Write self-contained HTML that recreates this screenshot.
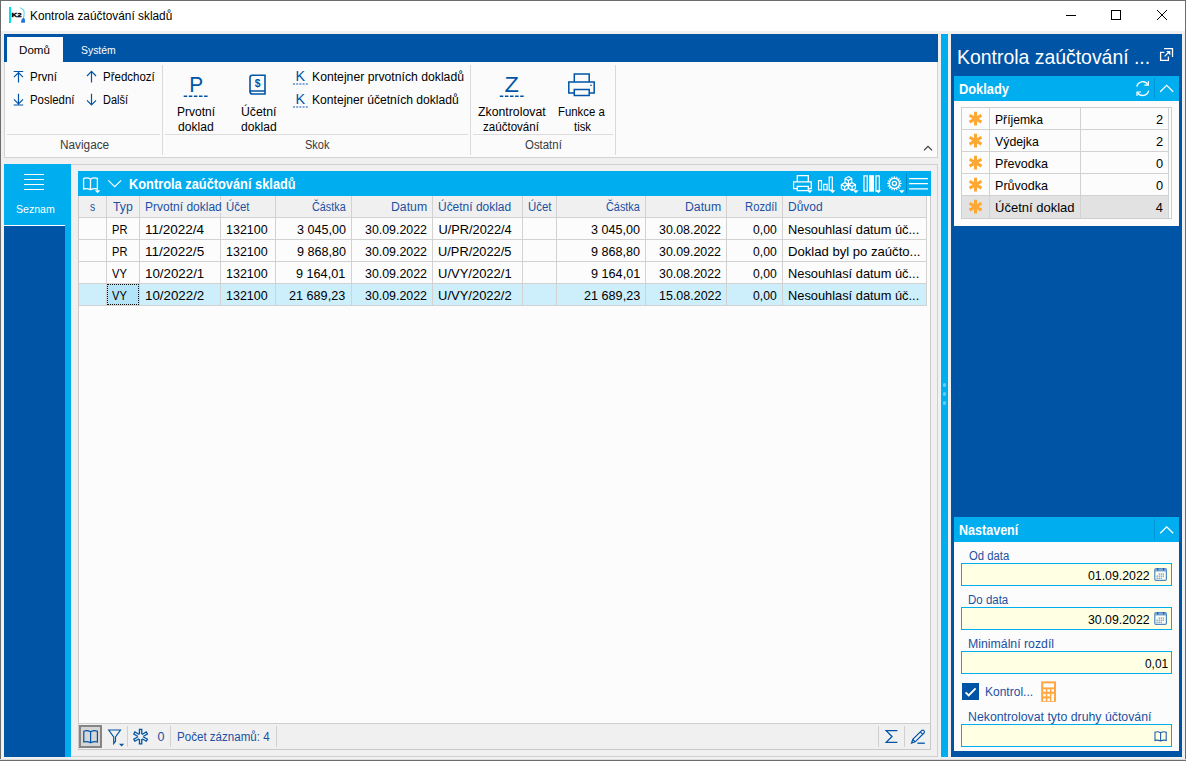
<!DOCTYPE html>
<html lang="cs"><head><meta charset="utf-8"><title>Kontrola zaúčtování skladů</title>
<style>
html,body{margin:0;padding:0;}
body{width:1186px;height:761px;position:relative;overflow:hidden;background:#f0f0f0;font-family:"Liberation Sans",sans-serif;}
#w{position:absolute;left:0;top:0;width:1186px;height:761px;overflow:hidden;}
#w div,#w span,#w svg{position:absolute;display:block;}
#w span{white-space:nowrap;transform-origin:0 0;}
</style></head><body><div id="w">
<div style="left:1px;top:1px;width:1184px;height:30px;background:#ffffff;"></div>
<div style="left:0px;top:0px;width:1186px;height:1px;background:#6c6c6c;"></div>
<div style="left:0px;top:0px;width:1px;height:761px;background:#6c6c6c;"></div>
<div style="left:1185px;top:0px;width:1px;height:761px;background:#6c6c6c;"></div>
<div style="left:0px;top:759px;width:1186px;height:1px;background:#dcdcdc;"></div>
<div style="left:0px;top:760px;width:1186px;height:1px;background:#6c6c6c;"></div>
<span style="left:30.10px;top:9.00px;font-size:12.5px;line-height:14px;color:#000;transform:scaleX(0.9481);">Kontrola zaúčtování skladů</span>
<div style="left:4px;top:34px;width:934px;height:28px;background:#0054a6;"></div>
<div style="left:7px;top:37px;width:56px;height:25px;background:#fbfbfb;"></div>
<div style="left:4px;top:62px;width:934px;height:96px;background:#fbfbfb;box-sizing:border-box;border:1px solid #d3d3d3;border-top:none;"></div>
<span style="left:19.16px;top:44.00px;font-size:11.4px;line-height:12px;color:#000;transform:scaleX(1.0187);">Domů</span>
<span style="left:80.59px;top:44.00px;font-size:11.4px;line-height:12px;color:#fff;transform:scaleX(0.9129);">Systém</span>
<div style="left:162px;top:65px;width:1px;height:90px;background:#dadada;"></div>
<div style="left:470px;top:65px;width:1px;height:90px;background:#dadada;"></div>
<div style="left:615px;top:65px;width:1px;height:90px;background:#dadada;"></div>
<div style="left:7px;top:134px;width:153px;height:1px;background:#dcdcdc;"></div>
<div style="left:165px;top:134px;width:303px;height:1px;background:#dcdcdc;"></div>
<div style="left:473px;top:134px;width:140px;height:1px;background:#dcdcdc;"></div>
<span style="left:59.51px;top:137.70px;font-size:12.5px;line-height:14px;color:#3a3a3a;transform:scaleX(0.9432);">Navigace</span>
<span style="left:304.55px;top:137.70px;font-size:12.5px;line-height:14px;color:#3a3a3a;transform:scaleX(0.8805);">Skok</span>
<span style="left:525.34px;top:137.70px;font-size:12.5px;line-height:14px;color:#3a3a3a;transform:scaleX(0.9134);">Ostatní</span>
<span style="left:29.93px;top:69.60px;font-size:12.5px;line-height:14px;color:#000;transform:scaleX(0.9227);">První</span>
<span style="left:29.94px;top:92.60px;font-size:12.5px;line-height:14px;color:#000;transform:scaleX(0.9144);">Poslední</span>
<span style="left:102.73px;top:69.60px;font-size:12.5px;line-height:14px;color:#000;transform:scaleX(0.9204);">Předchozí</span>
<span style="left:102.77px;top:92.60px;font-size:12.5px;line-height:14px;color:#000;transform:scaleX(0.8765);">Další</span>
<span style="left:176.89px;top:104.60px;font-size:12.5px;line-height:14px;color:#000;transform:scaleX(0.9608);">Prvotní</span>
<span style="left:178.47px;top:119.60px;font-size:12.5px;line-height:14px;color:#000;transform:scaleX(0.9687);">doklad</span>
<span style="left:240.53px;top:104.60px;font-size:12.5px;line-height:14px;color:#000;transform:scaleX(0.9808);">Účetní</span>
<span style="left:240.57px;top:119.60px;font-size:12.5px;line-height:14px;color:#000;transform:scaleX(0.9687);">doklad</span>
<span style="left:311.77px;top:69.60px;font-size:12.5px;line-height:14px;color:#000;transform:scaleX(0.9762);">Kontejner prvotních dokladů</span>
<span style="left:311.78px;top:92.60px;font-size:12.5px;line-height:14px;color:#000;transform:scaleX(0.9684);">Kontejner účetních dokladů</span>
<span style="left:478.28px;top:104.60px;font-size:12.5px;line-height:14px;color:#000;transform:scaleX(0.9835);">Zkontrolovat</span>
<span style="left:482.99px;top:119.60px;font-size:12.5px;line-height:14px;color:#000;transform:scaleX(0.9251);">zaúčtování</span>
<span style="left:557.84px;top:104.60px;font-size:12.5px;line-height:14px;color:#000;transform:scaleX(0.9090);">Funkce a</span>
<span style="left:573.58px;top:119.60px;font-size:12.5px;line-height:14px;color:#000;transform:scaleX(0.9047);">tisk</span>
<div style="left:4px;top:164px;width:67px;height:593px;background:#00adef;"></div>
<div style="left:4px;top:226px;width:61px;height:531px;background:#0054a6;"></div>
<div style="left:4px;top:225px;width:61px;height:1px;background:#ffffff;"></div>
<div style="left:24px;top:174px;width:20px;height:1.25px;background:#ffffff;"></div>
<div style="left:24px;top:179px;width:20px;height:1.25px;background:#ffffff;"></div>
<div style="left:24px;top:184px;width:20px;height:1.25px;background:#ffffff;"></div>
<div style="left:24px;top:189px;width:20px;height:1.25px;background:#ffffff;"></div>
<span style="left:15.78px;top:202.90px;font-size:11.3px;line-height:12px;color:#fff;transform:scaleX(0.9329);">Seznam</span>
<div style="left:71px;top:164px;width:867px;height:593px;background:#f0f0f0;box-sizing:border-box;border:1px solid #d0d0d0;border-left:none;"></div>
<div style="left:78px;top:171px;width:853px;height:25px;background:#00adef;"></div>
<span style="left:128.54px;top:175.80px;font-size:13.9px;line-height:16px;color:#fff;font-weight:bold;transform:scaleX(0.9229);">Kontrola zaúčtování skladů</span>
<div style="left:78px;top:196px;width:853px;height:554px;background:#fcfcfc;box-sizing:border-box;border:1px solid #c9c9c9;border-top:none;"></div>
<div style="left:79px;top:196px;width:847px;height:21px;background:#f0f0f0;"></div>
<div style="left:79px;top:284px;width:847px;height:21px;background:#cdeefb;"></div>
<div style="left:107px;top:284px;width:32px;height:21px;background:#b4e4f8;box-sizing:border-box;border:1px dotted #111;"></div>
<div style="left:79px;top:217px;width:848px;height:1px;background:#d2d2d2;"></div>
<div style="left:79px;top:239px;width:848px;height:1px;background:#d2d2d2;"></div>
<div style="left:79px;top:261px;width:848px;height:1px;background:#d2d2d2;"></div>
<div style="left:79px;top:283px;width:848px;height:1px;background:#d2d2d2;"></div>
<div style="left:79px;top:305px;width:848px;height:1px;background:#d2d2d2;"></div>
<div style="left:106px;top:196px;width:1px;height:110px;background:#d2d2d2;"></div>
<div style="left:139px;top:196px;width:1px;height:110px;background:#d2d2d2;"></div>
<div style="left:220px;top:196px;width:1px;height:110px;background:#d2d2d2;"></div>
<div style="left:275px;top:196px;width:1px;height:110px;background:#d2d2d2;"></div>
<div style="left:351px;top:196px;width:1px;height:110px;background:#d2d2d2;"></div>
<div style="left:432px;top:196px;width:1px;height:110px;background:#d2d2d2;"></div>
<div style="left:522px;top:196px;width:1px;height:110px;background:#d2d2d2;"></div>
<div style="left:556px;top:196px;width:1px;height:110px;background:#d2d2d2;"></div>
<div style="left:645px;top:196px;width:1px;height:110px;background:#d2d2d2;"></div>
<div style="left:726px;top:196px;width:1px;height:110px;background:#d2d2d2;"></div>
<div style="left:782px;top:196px;width:1px;height:110px;background:#d2d2d2;"></div>
<div style="left:926px;top:196px;width:1px;height:110px;background:#d2d2d2;"></div>
<span style="left:90.39px;top:200.00px;font-size:12.5px;line-height:14px;color:#1b50a2;transform:scaleX(0.8273);">s</span>
<span style="left:112.71px;top:200.00px;font-size:12.5px;line-height:14px;color:#1b50a2;transform:scaleX(0.9781);">Typ</span>
<div style="left:220px;top:200px;width:1px;height:13px;background:#f0f0f0;"></div>
<span style="left:144.89px;top:200.00px;font-size:12.5px;line-height:14px;color:#1b50a2;transform:scaleX(0.9606);">Prvotní doklad</span>
<span style="left:226.40px;top:200.00px;font-size:12.5px;line-height:14px;color:#1b50a2;transform:scaleX(0.9111);">Účet</span>
<span style="left:311.51px;top:200.00px;font-size:12.5px;line-height:14px;color:#1b50a2;transform:scaleX(0.8653);">Částka</span>
<span style="left:391.37px;top:200.00px;font-size:12.5px;line-height:14px;color:#1b50a2;transform:scaleX(0.9814);">Datum</span>
<span style="left:438.25px;top:200.00px;font-size:12.5px;line-height:14px;color:#1b50a2;transform:scaleX(0.9572);">Účetní doklad</span>
<span style="left:528.49px;top:200.00px;font-size:12.5px;line-height:14px;color:#1b50a2;transform:scaleX(0.9152);">Účet</span>
<span style="left:605.51px;top:200.00px;font-size:12.5px;line-height:14px;color:#1b50a2;transform:scaleX(0.8705);">Částka</span>
<span style="left:684.97px;top:200.00px;font-size:12.5px;line-height:14px;color:#1b50a2;transform:scaleX(0.9814);">Datum</span>
<span style="left:745.25px;top:200.00px;font-size:12.5px;line-height:14px;color:#1b50a2;transform:scaleX(0.9026);">Rozdíl</span>
<span style="left:787.99px;top:200.00px;font-size:12.5px;line-height:14px;color:#1b50a2;transform:scaleX(0.9585);">Důvod</span>
<span style="left:112.29px;top:221.80px;font-size:12.8px;line-height:15px;color:#000;transform:scaleX(0.8646);">PR</span>
<span style="left:145.06px;top:221.80px;font-size:12.8px;line-height:15px;color:#000;transform:scaleX(1.0542);">11/2022/4</span>
<span style="left:226.34px;top:221.80px;font-size:12.8px;line-height:15px;color:#000;transform:scaleX(0.9758);">132100</span>
<span style="left:296.62px;top:221.80px;font-size:12.8px;line-height:15px;color:#000;transform:scaleX(0.9831);">3 045,00</span>
<span style="left:365.33px;top:221.80px;font-size:12.8px;line-height:15px;color:#000;transform:scaleX(0.9675);">30.09.2022</span>
<span style="left:438.41px;top:221.80px;font-size:12.8px;line-height:15px;color:#000;">U/PR/2022/4</span>
<span style="left:590.82px;top:221.80px;font-size:12.8px;line-height:15px;color:#000;transform:scaleX(0.9831);">3 045,00</span>
<span style="left:659.03px;top:221.80px;font-size:12.8px;line-height:15px;color:#000;transform:scaleX(0.9675);">30.08.2022</span>
<span style="left:753.27px;top:221.80px;font-size:12.8px;line-height:15px;color:#000;transform:scaleX(0.9504);">0,00</span>
<span style="left:788.05px;top:221.80px;font-size:12.8px;line-height:15px;color:#000;transform:scaleX(1.0026);">Nesouhlasí datum úč...</span>
<span style="left:112.29px;top:243.80px;font-size:12.8px;line-height:15px;color:#000;transform:scaleX(0.8646);">PR</span>
<span style="left:145.06px;top:243.80px;font-size:12.8px;line-height:15px;color:#000;transform:scaleX(1.0566);">11/2022/5</span>
<span style="left:226.34px;top:243.80px;font-size:12.8px;line-height:15px;color:#000;transform:scaleX(0.9758);">132100</span>
<span style="left:296.50px;top:243.80px;font-size:12.8px;line-height:15px;color:#000;transform:scaleX(0.9856);">9 868,80</span>
<span style="left:365.33px;top:243.80px;font-size:12.8px;line-height:15px;color:#000;transform:scaleX(0.9675);">30.09.2022</span>
<span style="left:438.41px;top:243.80px;font-size:12.8px;line-height:15px;color:#000;transform:scaleX(1.0024);">U/PR/2022/5</span>
<span style="left:590.70px;top:243.80px;font-size:12.8px;line-height:15px;color:#000;transform:scaleX(0.9856);">9 868,80</span>
<span style="left:659.03px;top:243.80px;font-size:12.8px;line-height:15px;color:#000;transform:scaleX(0.9675);">30.09.2022</span>
<span style="left:753.27px;top:243.80px;font-size:12.8px;line-height:15px;color:#000;transform:scaleX(0.9504);">0,00</span>
<span style="left:788.03px;top:243.80px;font-size:12.8px;line-height:15px;color:#000;transform:scaleX(1.0234);">Doklad byl po zaúčto...</span>
<span style="left:112.35px;top:265.80px;font-size:12.8px;line-height:15px;color:#000;transform:scaleX(0.8681);">VY</span>
<span style="left:145.07px;top:265.80px;font-size:12.8px;line-height:15px;color:#000;transform:scaleX(1.0411);">10/2022/1</span>
<span style="left:226.34px;top:265.80px;font-size:12.8px;line-height:15px;color:#000;transform:scaleX(0.9758);">132100</span>
<span style="left:296.49px;top:265.80px;font-size:12.8px;line-height:15px;color:#000;transform:scaleX(0.9882);">9 164,01</span>
<span style="left:365.33px;top:265.80px;font-size:12.8px;line-height:15px;color:#000;transform:scaleX(0.9675);">30.09.2022</span>
<span style="left:438.40px;top:265.80px;font-size:12.8px;line-height:15px;color:#000;transform:scaleX(1.0148);">U/VY/2022/1</span>
<span style="left:590.69px;top:265.80px;font-size:12.8px;line-height:15px;color:#000;transform:scaleX(0.9882);">9 164,01</span>
<span style="left:659.03px;top:265.80px;font-size:12.8px;line-height:15px;color:#000;transform:scaleX(0.9675);">30.08.2022</span>
<span style="left:753.27px;top:265.80px;font-size:12.8px;line-height:15px;color:#000;transform:scaleX(0.9504);">0,00</span>
<span style="left:788.05px;top:265.80px;font-size:12.8px;line-height:15px;color:#000;transform:scaleX(1.0026);">Nesouhlasí datum úč...</span>
<span style="left:112.35px;top:287.80px;font-size:12.8px;line-height:15px;color:#000;transform:scaleX(0.8681);">VY</span>
<span style="left:145.07px;top:287.80px;font-size:12.8px;line-height:15px;color:#000;transform:scaleX(1.0411);">10/2022/2</span>
<span style="left:226.34px;top:287.80px;font-size:12.8px;line-height:15px;color:#000;transform:scaleX(0.9758);">132100</span>
<span style="left:289.43px;top:287.80px;font-size:12.8px;line-height:15px;color:#000;transform:scaleX(0.9874);">21 689,23</span>
<span style="left:365.33px;top:287.80px;font-size:12.8px;line-height:15px;color:#000;transform:scaleX(0.9675);">30.09.2022</span>
<span style="left:438.40px;top:287.80px;font-size:12.8px;line-height:15px;color:#000;transform:scaleX(1.0148);">U/VY/2022/2</span>
<span style="left:583.63px;top:287.80px;font-size:12.8px;line-height:15px;color:#000;transform:scaleX(0.9874);">21 689,23</span>
<span style="left:658.54px;top:287.80px;font-size:12.8px;line-height:15px;color:#000;transform:scaleX(0.9752);">15.08.2022</span>
<span style="left:753.27px;top:287.80px;font-size:12.8px;line-height:15px;color:#000;transform:scaleX(0.9504);">0,00</span>
<span style="left:788.05px;top:287.80px;font-size:12.8px;line-height:15px;color:#000;transform:scaleX(1.0026);">Nesouhlasí datum úč...</span>
<div style="left:79px;top:724px;width:851px;height:25px;background:#f0f0f0;"></div>
<div style="left:79px;top:723px;width:851px;height:1px;background:#cfcfcf;"></div>
<div style="left:79px;top:725px;width:23px;height:23px;background:#d6d6d6;box-sizing:border-box;border:2px solid #858585;"></div>
<div style="left:127px;top:726px;width:1px;height:21px;background:#d0d0d0;"></div>
<div style="left:170px;top:726px;width:1px;height:21px;background:#d0d0d0;"></div>
<div style="left:276px;top:726px;width:1px;height:21px;background:#d0d0d0;"></div>
<div style="left:878px;top:726px;width:1px;height:21px;background:#d0d0d0;"></div>
<div style="left:904px;top:726px;width:1px;height:21px;background:#d0d0d0;"></div>
<span style="left:157.51px;top:730.00px;font-size:12.5px;line-height:14px;color:#1b50a2;">0</span>
<span style="left:176.92px;top:730.00px;font-size:12.5px;line-height:14px;color:#1b50a2;transform:scaleX(0.9261);">Počet záznamů: 4</span>
<div style="left:941px;top:34px;width:7px;height:723px;background:#00adef;"></div>
<div style="left:948px;top:34px;width:3px;height:723px;background:#f0f0f0;"></div>
<div style="left:951px;top:34px;width:231px;height:723px;background:#0054a6;"></div>
<div style="left:943px;top:383.3px;width:3.4px;height:3.4px;background:#6ccdf4;border-radius:50%;"></div>
<div style="left:943px;top:392.3px;width:3.4px;height:3.4px;background:#6ccdf4;border-radius:50%;"></div>
<div style="left:943px;top:401.3px;width:3.4px;height:3.4px;background:#6ccdf4;border-radius:50%;"></div>
<span style="left:957.49px;top:44.80px;font-size:21.0px;line-height:23px;color:#fff;transform:scaleX(0.9244);">Kontrola zaúčtování ...</span>
<div style="left:954px;top:76px;width:225px;height:25px;background:#00adef;"></div>
<span style="left:958.75px;top:80.90px;font-size:14px;line-height:16px;color:#fff;font-weight:bold;transform:scaleX(0.9176);">Doklady</span>
<div style="left:1154px;top:78px;width:1px;height:20px;background:#0095d6;"></div>
<div style="left:954px;top:101px;width:225px;height:125px;background:#fcfcfc;"></div>
<div style="left:961px;top:107px;width:211px;height:112px;background:#fcfcfc;box-sizing:border-box;border:1px solid #cfcfcf;"></div>
<div style="left:962px;top:196px;width:206px;height:22px;background:#e2e2e2;"></div>
<div style="left:962px;top:129px;width:206px;height:1px;background:#d2d2d2;"></div>
<div style="left:962px;top:151px;width:206px;height:1px;background:#d2d2d2;"></div>
<div style="left:962px;top:173px;width:206px;height:1px;background:#d2d2d2;"></div>
<div style="left:962px;top:195px;width:206px;height:1px;background:#d2d2d2;"></div>
<div style="left:989px;top:108px;width:1px;height:110px;background:#d2d2d2;"></div>
<div style="left:1080px;top:108px;width:1px;height:110px;background:#d2d2d2;"></div>
<div style="left:1168px;top:108px;width:1px;height:110px;background:#d2d2d2;"></div>
<span style="left:995.40px;top:112.20px;font-size:12.8px;line-height:15px;color:#000;transform:scaleX(0.9493);">Příjemka</span>
<span style="left:1156.00px;top:112.20px;font-size:12.8px;line-height:15px;color:#000;">2</span>
<span style="left:995.45px;top:134.20px;font-size:12.8px;line-height:15px;color:#000;transform:scaleX(0.9633);">Výdejka</span>
<span style="left:1156.00px;top:134.20px;font-size:12.8px;line-height:15px;color:#000;">2</span>
<span style="left:995.37px;top:156.20px;font-size:12.8px;line-height:15px;color:#000;transform:scaleX(0.9816);">Převodka</span>
<span style="left:1155.88px;top:156.20px;font-size:12.8px;line-height:15px;color:#000;">0</span>
<span style="left:995.37px;top:178.20px;font-size:12.8px;line-height:15px;color:#000;transform:scaleX(0.9816);">Průvodka</span>
<span style="left:1155.88px;top:178.20px;font-size:12.8px;line-height:15px;color:#000;">0</span>
<span style="left:995.40px;top:200.20px;font-size:12.8px;line-height:15px;color:#000;transform:scaleX(1.0163);">Účetní doklad</span>
<span style="left:1155.75px;top:200.20px;font-size:12.8px;line-height:15px;color:#000;">4</span>
<div style="left:954px;top:517px;width:225px;height:25px;background:#00adef;"></div>
<span style="left:958.87px;top:521.90px;font-size:14px;line-height:16px;color:#fff;font-weight:bold;transform:scaleX(0.8959);">Nastavení</span>
<div style="left:1154px;top:519px;width:1px;height:21px;background:#0095d6;"></div>
<div style="left:954px;top:542px;width:225px;height:209px;background:#fcfcfc;"></div>
<div style="left:961px;top:563px;width:211px;height:23px;background:#ffffe4;box-sizing:border-box;border:1px solid #00adef;"></div>
<div style="left:961px;top:607px;width:211px;height:23px;background:#ffffe4;box-sizing:border-box;border:1px solid #00adef;"></div>
<div style="left:961px;top:651px;width:211px;height:23px;background:#ffffe4;box-sizing:border-box;border:1px solid #00adef;"></div>
<div style="left:961px;top:724px;width:211px;height:23px;background:#ffffe4;box-sizing:border-box;border:1px solid #00adef;"></div>
<span style="left:968.64px;top:549.00px;font-size:12.5px;line-height:14px;color:#1b50a2;transform:scaleX(0.9047);">Od data</span>
<span style="left:968.23px;top:593.00px;font-size:12.5px;line-height:14px;color:#1b50a2;transform:scaleX(0.9191);">Do data</span>
<span style="left:968.17px;top:637.00px;font-size:12.5px;line-height:14px;color:#1b50a2;transform:scaleX(0.9837);">Minimální rozdíl</span>
<span style="left:967.86px;top:709.60px;font-size:12.5px;line-height:14px;color:#1b50a2;transform:scaleX(0.9852);">Nekontrolovat tyto druhy účtování</span>
<span style="left:1087.97px;top:567.70px;font-size:12.8px;line-height:15px;color:#000;transform:scaleX(0.9621);">01.09.2022</span>
<span style="left:1088.03px;top:611.70px;font-size:12.8px;line-height:15px;color:#000;transform:scaleX(0.9611);">30.09.2022</span>
<span style="left:1145.28px;top:655.60px;font-size:12.8px;line-height:15px;color:#000;transform:scaleX(0.9302);">0,01</span>
<div style="left:962px;top:683px;width:17px;height:17px;background:#0054a6;"></div>
<span style="left:985.29px;top:685.10px;font-size:12.5px;line-height:14px;color:#1b50a2;transform:scaleX(0.9606);">Kontrol...</span>
<svg style="left:0;top:0;" width="1186" height="761" viewBox="0 0 1186 761"><rect x="9" y="7" width="2.1" height="16" fill="#00e0f0"/><text x="11.6" y="17.1" font-family="Liberation Sans" font-weight="bold" font-size="6.2" fill="#000" stroke="#000" stroke-width="0.35" textLength="10" lengthAdjust="spacingAndGlyphs">K2</text><path d="M20 7.6 L23.8 10 Q24.6 14 23.6 18" stroke="#58d4ee" stroke-width="1.1" fill="none" /><path d="M21.2 22.8 Q20.6 19.2 23.6 17.8 Q25.4 18.6 24.9 22.8 Z" fill="#1b78d8"/><path d="M1066 15.5 H1076" stroke="#000" stroke-width="1" fill="none" /><rect x="1111.5" y="10.5" width="9" height="9" fill="none" stroke="#000" stroke-width="1"/><path d="M1157 10 L1167 20 M1167 10 L1157 20" stroke="#000" stroke-width="1.0" fill="none" /><path d="M13.7 71.5 H23.2 M18.5 72.6 V82.4 M14 77.1 L18.5 72.6 L23 77.1" stroke="#0054a6" stroke-width="1.2" fill="none" /><path d="M13.7 105 H23.2 M18.5 93.7 V103.8 M14 99.3 L18.5 103.8 L23 99.3" stroke="#0054a6" stroke-width="1.2" fill="none" /><path d="M91.5 71.4 V82.5 M87 76 L91.5 71.4 L96 76" stroke="#0054a6" stroke-width="1.2" fill="none" /><path d="M91.5 93.7 V105 M87 100.4 L91.5 105 L96 100.4" stroke="#0054a6" stroke-width="1.2" fill="none" /><text transform="translate(189.14,91.7) scale(0.914,1)" font-family="Liberation Sans" font-size="22.82" fill="#0054a6">P</text><text transform="translate(504.39,91.7) scale(1.035,1)" font-family="Liberation Sans" font-size="22.82" fill="#0054a6">Z</text><text transform="translate(295.42,81.3) scale(0.991,1)" font-family="Liberation Sans" font-size="14.53" fill="#0054a6">K</text><text transform="translate(295.42,104.3) scale(0.991,1)" font-family="Liberation Sans" font-size="14.53" fill="#0054a6">K</text><path d="M183.7 96.2 H207.7" stroke="#0054a6" stroke-width="1.5" fill="none" stroke-dasharray="3.5 1.6"/><path d="M499.8 96.2 H523.8" stroke="#0054a6" stroke-width="1.5" fill="none" stroke-dasharray="3.5 1.6"/><path d="M293 84 H308" stroke="#5a8fcb" stroke-width="1.3" fill="none" stroke-dasharray="2 1.2"/><path d="M293 107 H308" stroke="#5a8fcb" stroke-width="1.3" fill="none" stroke-dasharray="2 1.2"/><path d="M265 75.2 H252.4 Q250 75.2 250 77.6 V91.4 Q250 94 252.6 94 H265 Z M250.4 91 H265" stroke="#0054a6" stroke-width="1.6" fill="none" /><text x="254.65" y="86.5" font-family="Liberation Sans" font-weight="bold" font-size="10.3" fill="#0054a6">$</text><path d="M574.3 81.5 V74 H589.2 V81.5 M574.3 93 H568.8 V82 H594.2 V93 H589.2 M574.3 89.6 H589.2 V95.5 H574.3 Z" stroke="#0054a6" stroke-width="1.5" fill="none" /><rect x="590.3" y="84.6" width="1.4" height="1.4" fill="#0054a6"/><path d="M924 150.3 L928 146.3 L932 150.3" stroke="#3a3a3a" stroke-width="1.2" fill="none" /><path d="M83.6 178.4 Q87.2 177.2 90.5 179 Q93.8 177.2 97.4 178.4 V189 Q93.8 188 90.5 189.8 Q87.2 188 83.6 189 Z M90.5 179 V189.8" stroke="#ffffff" stroke-width="1.3" fill="none" /><path d="M94.8 190.3 h5.6 l-2.8 3 z" fill="#fff"/><path d="M108.3 180.4 L114.7 186.6 L121.1 180.4" stroke="#ffffff" stroke-width="1.3" fill="none" /><path d="M797.3 181.4 V175.6 H808.3 V181.4 M797.3 188.6 H793.6 V181.8 H811.3 V188.6 H808.3 M797.3 186.4 H808.3 V190.6 H797.3 Z" stroke="#ffffff" stroke-width="1.3" fill="none" /><path d="M807.0 190.3 h5.6 l-2.8 3 z" fill="#fff"/><path d="M818.5 180.6 H821.5 V189.9 H818.5 Z M823.7 184.4 H827.1 V189.9 H823.7 Z M829.2 177 H832.3 V190.2 H829.2 Z" stroke="#ffffff" stroke-width="1.2" fill="none" /><path d="M829.8 190.3 h5.6 l-2.8 3 z" fill="#fff"/><path d="M848.4 176.6 L851.79 178.55 V182.45 L848.4 184.4 L845.01 182.45 V178.55 Z M845.01 178.55 L848.4 180.5 L851.79 178.55 M848.4 180.5 V184.4M844.7 182.7 L848.09 184.65 V188.54999999999998 L844.7 190.5 L841.31 188.54999999999998 V184.65 Z M841.31 184.65 L844.7 186.6 L848.09 184.65 M844.7 186.6 V190.5M852.1 182.7 L855.49 184.65 V188.54999999999998 L852.1 190.5 L848.71 188.54999999999998 V184.65 Z M848.71 184.65 L852.1 186.6 L855.49 184.65 M852.1 186.6 V190.5" stroke="#ffffff" stroke-width="1.1" fill="none" /><path d="M853.0 190.3 h5.6 l-2.8 3 z" fill="#fff"/><path d="M864 175.8 H867.2 V191.1 H864 Z M876 175.8 H879.3 V191.1 H876 Z" stroke="#ffffff" stroke-width="1.2" fill="none" /><rect x="869.1" y="175.2" width="4.9" height="16.5" fill="#fff"/><path d="M875.6 190.3 h5.6 l-2.8 3 z" fill="#fff"/><path d="M899.60 183.40 L901.60 183.40 M899.20 185.39 L901.05 186.16 M898.08 187.08 L899.49 188.49 M896.39 188.20 L897.16 190.05 M894.40 188.60 L894.40 190.60 M892.41 188.20 L891.64 190.05 M890.72 187.08 L889.31 188.49 M889.60 185.39 L887.75 186.16 M889.20 183.40 L887.20 183.40 M889.60 181.41 L887.75 180.64 M890.72 179.72 L889.31 178.31 M892.41 178.60 L891.64 176.75 M894.40 178.20 L894.40 176.20 M896.39 178.60 L897.16 176.75 M898.08 179.72 L899.49 178.31 M899.20 181.41 L901.05 180.64 " stroke="#ffffff" stroke-width="1.1" fill="none" /><circle cx="894.4" cy="183.4" r="5.1" fill="none" stroke="#fff" stroke-width="1.5"/><circle cx="894.4" cy="183.4" r="2.1" fill="none" stroke="#fff" stroke-width="1.3"/><path d="M899.0 190.3 h5.6 l-2.8 3 z" fill="#fff"/><path d="M906.5 173.2 V193.4" stroke="#0089c6" stroke-width="1" fill="none" /><path d="M909 178.6 H928 M909 183.7 H928 M909 188.8 H928" stroke="#ffffff" stroke-width="1.3" fill="none" /><path d="M83.8 731.2 Q87.2 730 90.6 731.8 Q94 730 97.4 731.2 V742 Q94 741 90.6 742.8 Q87.2 741 83.8 742 Z M90.6 731.8 V742.8" stroke="#0054a6" stroke-width="1.2" fill="none" /><path d="M108.7 730 H120.5 L115.5 737 V741.2 L113.7 743.6 V737 Z" stroke="#0054a6" stroke-width="1.15" fill="none" /><path d="M119 743.8 h5.2 l-2.6 2.7 z" fill="#0054a6"/><path d="M139.45 734.30 L139.45 729.40 L141.75 729.40 L141.75 734.30 M138.03 736.45 L133.79 734.00 L134.94 732.00 L139.18 734.45 M139.18 738.75 L134.94 741.20 L133.79 739.20 L138.03 736.75 M141.75 738.90 L141.75 743.80 L139.45 743.80 L139.45 738.90 M143.17 736.75 L147.41 739.20 L146.26 741.20 L142.02 738.75 M142.02 734.45 L146.26 732.00 L147.41 734.00 L143.17 736.45 " stroke="#0054a6" stroke-width="1.3" fill="none" stroke-linejoin="miter"/><path d="M897.4 730.6 H886.2 L892 736.5 L886.2 742.4 H897.4" stroke="#0054a6" stroke-width="1.3" fill="none" /><path d="M911.6 743 L912.8 739.4 L921.6 730.6 Q922.8 729.6 923.9 730.7 Q925 731.8 924 733 L915.2 741.8 Z M912.8 739.4 L915.2 741.8 M920.3 731.9 L922.7 734.3" stroke="#0054a6" stroke-width="1.2" fill="none" /><path d="M917.4 743.2 H924.8" stroke="#0054a6" stroke-width="1.3" fill="none" /><path d="M1164.4 52.4 H1160.6 V60.4 H1168.4 V56.6 M1164 48.6 H1172.5 V57" stroke="#ffffff" stroke-width="1.3" fill="none" /><path d="M1164.6 56.4 L1169 52" stroke="#ffffff" stroke-width="1.3" fill="none" /><path d="M1166.2 51.1 H1170.3 V55.2 Z" fill="#fff"/><path d="M1136.8 86.6 A6 6 0 0 1 1147.8 84.6 M1148.6 90.6 A6 6 0 0 1 1137.6 92.6" stroke="#ffffff" stroke-width="1.3" fill="none" /><path d="M1148.4 81.2 V85.2 H1144.4 M1137 96 V92 H1141" stroke="#ffffff" stroke-width="1.2" fill="none" /><path d="M1160.2 91.8 L1166.7 85.3 L1173.2 91.8" stroke="#ffffff" stroke-width="1.3" fill="none" /><path d="M1160.2 533.3 L1166.7 526.8 L1173.2 533.3" stroke="#ffffff" stroke-width="1.3" fill="none" /><path d="M975.50 111.80 L975.50 125.60 M981.48 115.25 L969.52 122.15 M981.48 122.15 L969.52 115.25 " stroke="#ffa733" stroke-width="3.0" fill="none" /><path d="M975.50 133.80 L975.50 147.60 M981.48 137.25 L969.52 144.15 M981.48 144.15 L969.52 137.25 " stroke="#ffa733" stroke-width="3.0" fill="none" /><path d="M975.50 155.80 L975.50 169.60 M981.48 159.25 L969.52 166.15 M981.48 166.15 L969.52 159.25 " stroke="#ffa733" stroke-width="3.0" fill="none" /><path d="M975.50 177.80 L975.50 191.60 M981.48 181.25 L969.52 188.15 M981.48 188.15 L969.52 181.25 " stroke="#ffa733" stroke-width="3.0" fill="none" /><path d="M975.50 199.80 L975.50 213.60 M981.48 203.25 L969.52 210.15 M981.48 210.15 L969.52 203.25 " stroke="#ffa733" stroke-width="3.0" fill="none" /><rect x="1154.8" y="568.7" width="11.6" height="11.7" rx="1.2" fill="#fdfdf0" stroke="#4f86c6" stroke-width="1.2"/><rect x="1154.8" y="568.7" width="11.6" height="2.8" fill="#7aa6d6"/><rect x="1157" y="568.1" width="1.3" height="2.4" fill="#1f5fae"/><rect x="1162.9" y="568.1" width="1.3" height="2.4" fill="#1f5fae"/><rect x="1158.65" y="573.50" width="1.1" height="1.1" fill="#2f6db8"/><rect x="1160.70" y="573.50" width="1.1" height="1.1" fill="#2f6db8"/><rect x="1162.75" y="573.50" width="1.1" height="1.1" fill="#2f6db8"/><rect x="1156.60" y="575.60" width="1.1" height="1.1" fill="#2f6db8"/><rect x="1158.65" y="575.60" width="1.1" height="1.1" fill="#2f6db8"/><rect x="1160.70" y="575.60" width="1.1" height="1.1" fill="#2f6db8"/><rect x="1162.75" y="575.60" width="1.1" height="1.1" fill="#2f6db8"/><rect x="1156.60" y="577.70" width="1.1" height="1.1" fill="#2f6db8"/><rect x="1158.65" y="577.70" width="1.1" height="1.1" fill="#2f6db8"/><rect x="1160.70" y="577.70" width="1.1" height="1.1" fill="#2f6db8"/><rect x="1154.8" y="612.7" width="11.6" height="11.7" rx="1.2" fill="#fdfdf0" stroke="#4f86c6" stroke-width="1.2"/><rect x="1154.8" y="612.7" width="11.6" height="2.8" fill="#7aa6d6"/><rect x="1157" y="612.1" width="1.3" height="2.4" fill="#1f5fae"/><rect x="1162.9" y="612.1" width="1.3" height="2.4" fill="#1f5fae"/><rect x="1158.65" y="617.50" width="1.1" height="1.1" fill="#2f6db8"/><rect x="1160.70" y="617.50" width="1.1" height="1.1" fill="#2f6db8"/><rect x="1162.75" y="617.50" width="1.1" height="1.1" fill="#2f6db8"/><rect x="1156.60" y="619.60" width="1.1" height="1.1" fill="#2f6db8"/><rect x="1158.65" y="619.60" width="1.1" height="1.1" fill="#2f6db8"/><rect x="1160.70" y="619.60" width="1.1" height="1.1" fill="#2f6db8"/><rect x="1162.75" y="619.60" width="1.1" height="1.1" fill="#2f6db8"/><rect x="1156.60" y="621.70" width="1.1" height="1.1" fill="#2f6db8"/><rect x="1158.65" y="621.70" width="1.1" height="1.1" fill="#2f6db8"/><rect x="1160.70" y="621.70" width="1.1" height="1.1" fill="#2f6db8"/><path d="M965.6 692.4 L968.7 695.5 L975.6 688.4" stroke="#fffff0" stroke-width="1.9" fill="none" /><rect x="1041.2" y="681.4" width="14.8" height="20.4" fill="#ffa640"/><rect x="1043.2" y="683.4" width="10.8" height="4" fill="#fdfdfd"/><rect x="1043.2" y="689.2" width="2.6" height="2.6" fill="#fdfdfd"/><rect x="1047.3" y="689.2" width="2.6" height="2.6" fill="#fdfdfd"/><rect x="1051.4" y="689.2" width="2.6" height="2.6" fill="#fdfdfd"/><rect x="1043.2" y="693.8" width="2.6" height="2.6" fill="#fdfdfd"/><rect x="1047.3" y="693.8" width="2.6" height="2.6" fill="#fdfdfd"/><rect x="1051.4" y="693.8" width="2.6" height="7.2" fill="#fdfdfd"/><rect x="1043.2" y="698.4" width="2.6" height="2.6" fill="#fdfdfd"/><rect x="1047.3" y="698.4" width="2.6" height="2.6" fill="#fdfdfd"/><path d="M1155 732.2 Q1157.8 731.2 1160.6 732.8 Q1163.4 731.2 1166.2 732.2 V740.4 Q1163.4 739.6 1160.6 741 Q1157.8 739.6 1155 740.4 Z M1160.6 732.8 V741" stroke="#1f5fae" stroke-width="1.1" fill="none" /></svg>
</div></body></html>
